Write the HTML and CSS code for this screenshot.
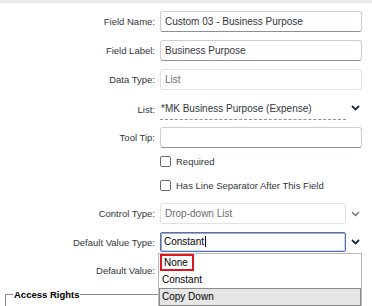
FILE: index.html
```html
<!DOCTYPE html>
<html lang="en">

<head>
    <meta charset="UTF-8">
    <meta name="viewport" content="width=device-width, initial-scale=1.0">
    <title>Field Settings</title>
    <link rel="stylesheet" href="styles.css">
</head>

<body>
    <div class="topbar"></div>
    <div class="form">
        <div class="row">
            <span class="lbl">Field Name:</span>
            <div class="field"><div class="inp">Custom 03 - Business Purpose</div></div>
        </div>
        <div class="row">
            <span class="lbl">Field Label:</span>
            <div class="field"><div class="inp">Business Purpose</div></div>
        </div>
        <div class="row">
            <span class="lbl">Data Type:</span>
            <div class="field"><div class="inp readonly">List</div></div>
        </div>
        <div class="row row-list">
            <span class="lbl">List:</span>
            <div class="field">
                <div class="listval">*MK Business Purpose (Expense)</div>
                <svg class="chev" width="9" height="6" viewBox="0 0 9 6"><polyline points="1,1 4.5,4.5 8,1" fill="none" stroke="#1d2d3e" stroke-width="1.8"/></svg>
            </div>
        </div>
        <div class="row row-tip">
            <span class="lbl">Tool Tip:</span>
            <div class="field"><div class="inp"></div></div>
        </div>
        <div class="row row-check">
            <span class="lbl"></span>
            <div class="field"><span class="box"></span><span class="ctext">Required</span></div>
        </div>
        <div class="row row-check2">
            <span class="lbl"></span>
            <div class="field"><span class="box"></span><span class="ctext">Has Line Separator After This Field</span></div>
        </div>
        <div class="row row-ctrl">
            <span class="lbl">Control Type:</span>
            <div class="field">
                <div class="inp short readonly">Drop-down List</div>
                <svg class="chev" width="9" height="6" viewBox="0 0 9 6"><polyline points="1,1 4.5,4.5 8,1" fill="none" stroke="#6a6d70" stroke-width="1.3"/></svg>
            </div>
        </div>
        <div class="row">
            <span class="lbl">Default Value Type:</span>
            <div class="field dvt">
                <div class="inp short focus">Constant<span class="caret"></span></div>
                <svg class="chev" width="9" height="6" viewBox="0 0 9 6"><polyline points="1,1 4.5,4.5 8,1" fill="none" stroke="#1d2d3e" stroke-width="1.8"/></svg>
                <ul class="dropdown">
                    <li><span class="hl">None</span></li>
                    <li>Constant</li>
                    <li class="sel">Copy Down</li>
                </ul>
            </div>
        </div>
        <div class="row">
            <span class="lbl">Default Value:</span>
            <div class="field"><div class="inp"></div></div>
        </div>
    </div>
    <fieldset class="rights">
        <legend>Access Rights</legend>
    </fieldset>
</body>

</html>
```

FILE: styles.css
```css
* {
    margin: 0;
    padding: 0;
    box-sizing: border-box;
}

body {
    width: 372px;
    height: 306px;
    overflow: hidden;
    background: #fff;
    color: #32363a;
    font-family: "Liberation Sans", Arial, sans-serif;
}

.topbar {
    height: 3px;
    background: #ebebeb;
}

.form {
    padding-top: 8px;
}

.row {
    display: grid;
    grid-template-columns: 155px 1fr;
    column-gap: 5px;
    align-items: center;
    margin-bottom: 8px;
}

.lbl {
    text-align: right;
    font-size: 9.5px;
}

.field {
    display: flex;
    align-items: center;
    position: relative;
}

.inp {
    width: 202px;
    height: 21px;
    padding: 0 4px;
    border: 1px solid #cbced2;
    border-bottom-color: #89919a;
    border-radius: 3px;
    font-size: 10px;
    line-height: 19px;
    color: #32363a;
}

.readonly {
    border-color: #dfe1e3;
    color: #6a6d70;
}

.short {
    width: 186px;
}

.focus {
    height: 20px;
    line-height: 18px;
    border: 1px solid #4b74c9;
    border-radius: 2px;
    box-shadow: inset 1px 1px 0 #a9a9a9, inset -1px -1px 0 #d4d4d4;
    color: #000;
    padding-left: 3px;
}

.caret {
    display: inline-block;
    width: 1px;
    height: 11px;
    margin-left: 1px;
    vertical-align: -2px;
    background: #000;
}

.chev {
    margin-left: 5px;
}

.row-list {
    margin-bottom: 7px;
}

.row-list .field {
    height: 22px;
}

.listval {
    width: 186px;
    height: 22px;
    padding: 5px 1px 0;
    font-size: 10px;
    border-bottom: 1px dashed #7f94aa;
}

.row-list .chev {
    margin-left: 5px;
    margin-top: -3px;
}

.row-tip {
    margin-bottom: 6px;
}

.row-check {
    margin-bottom: 10px;
}

.row-check2 {
    margin-bottom: 11px;
}

.row-check .field,
.row-check2 .field {
    height: 14px;
}

.box {
    width: 11px;
    height: 11px;
    border: 1px solid #6a6d70;
    border-radius: 2px;
    margin-right: 5px;
}

.ctext {
    font-size: 9.5px;
}

.dropdown {
    position: absolute;
    left: -2px;
    top: 21px;
    width: 204px;
    list-style: none;
    background: #fff;
    border: 1px solid #b8b8b8;
    font-size: 10px;
    color: #000;
    z-index: 2;
}

.dropdown li {
    height: 17px;
    line-height: 15px;
    padding-left: 2px;
    border: 1px solid transparent;
}

.dropdown li:first-child {
    padding-left: 0;
}

.hl {
    display: inline-block;
    height: 17px;
    margin-top: -1px;
    padding: 0 4px 0 2px;
    border: 2px solid #e0161e;
    line-height: 13px;
}

.dropdown .sel {
    height: 18px;
    line-height: 16px;
    background: #e6e6e6;
    border-color: #8c8c8c;
}

.rights {
    width: 340px;
    margin: 2px 0 0 5px;
    padding: 0 0 0 7px;
    border: none;
    border-top: 1px solid #8a8a8a;
    border-left: 1px solid #8a8a8a;
    height: 40px;
}

.rights legend {
    padding: 0 1px;
    font-size: 9.5px;
    font-weight: bold;
    color: #000;
}
```
